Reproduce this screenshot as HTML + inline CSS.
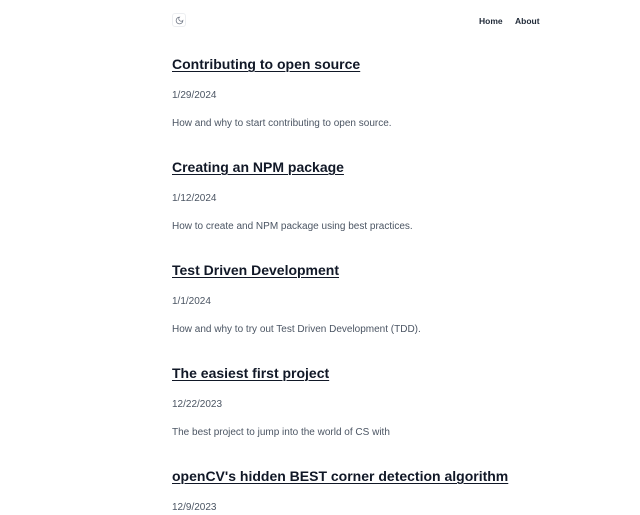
<!DOCTYPE html>
<html><head><style>
*{margin:0;padding:0;box-sizing:border-box}
body{width:640px;height:515px;background:#fff;font-family:"Liberation Sans",sans-serif;color:#111827;position:relative;overflow:hidden}
.btn{position:absolute;left:172px;top:13px;width:14px;height:14px;border:1px solid #eceef1;border-radius:3px}
.btn svg{position:absolute;left:2px;top:2px}
.nav{position:absolute;top:16px;font-size:8.5px;font-weight:bold;color:#1f2937}
.t{position:absolute;left:172px;font-size:14px;font-weight:bold;text-decoration:underline;text-decoration-thickness:1px;text-underline-offset:2px;color:#111827;white-space:nowrap;line-height:18px}
.d{position:absolute;left:172px;font-size:10px;color:#4b5563;line-height:12px}
.p{position:absolute;left:172px;font-size:10px;color:#4b5563;line-height:12px;white-space:nowrap}
</style></head><body>
<div class="btn"><svg width="9" height="9" viewBox="0 0 24 24" fill="none" stroke="#6b7280" stroke-width="2"><path d="M12 3a6 6 0 0 0 9 9 9 9 0 1 1-9-9z"/></svg></div>
<div class="nav" style="left:479px">Home</div>
<div class="nav" style="left:515px">About</div>

<div class="t" style="top:55px">Contributing to open source</div>
<div class="d" style="top:90px">1/29/2024</div>
<div class="p" style="top:118px">How and why to start contributing to open source.</div>

<div class="t" style="top:158px">Creating an NPM package</div>
<div class="d" style="top:193px">1/12/2024</div>
<div class="p" style="top:221px">How to create and NPM package using best practices.</div>

<div class="t" style="top:261px">Test Driven Development</div>
<div class="d" style="top:296px">1/1/2024</div>
<div class="p" style="top:324px">How and why to try out Test Driven Development (TDD).</div>

<div class="t" style="top:364px">The easiest first project</div>
<div class="d" style="top:399px">12/22/2023</div>
<div class="p" style="top:427px">The best project to jump into the world of CS with</div>

<div class="t" style="top:467px">openCV's hidden BEST corner detection algorithm</div>
<div class="d" style="top:502px">12/9/2023</div>
</body></html>
